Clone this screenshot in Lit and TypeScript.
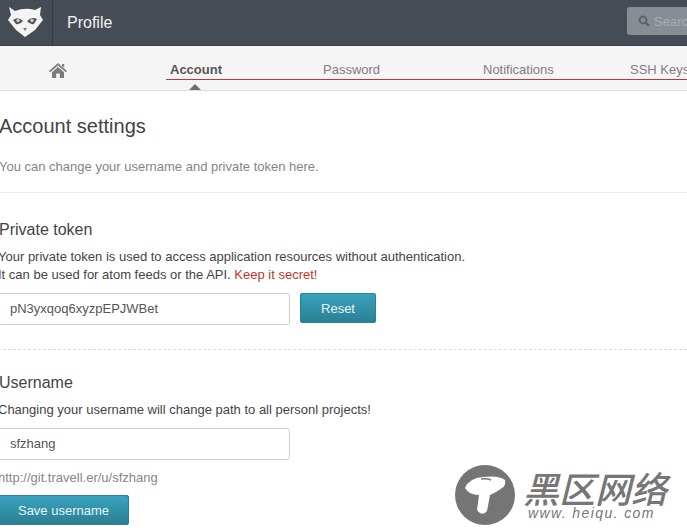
import { LitElement, html, css } from 'lit'
import { customElement } from 'lit/decorators.js'

@customElement('app-root')
export class AppRoot extends LitElement {
  render() {
    return html`
      <header class="top">
        <div class="logo">
          <svg width="36" height="31" viewBox="0 0 36 31">
            <path d="M1 0 L7 4 Q17 0 27 3 L33 0 L32 8 L35 13 L27 23 L17 30 L8 23 L0 13 L3 8 Z" fill="#f4f4f4" />
            <path d="M5 13 Q10 9 15 14 Q12 18 8 17 Z M29 12 Q24 9 19 14 Q22 18 26 17 Z" fill="#50565f" />
            <circle cx="10" cy="13.5" r="1.6" fill="#d8d8d8" />
            <circle cx="24" cy="13.5" r="1.6" fill="#d8d8d8" />
            <path d="M15 21 H19 L17 24 Z" fill="#777" />
          </svg>
        </div>
        <div class="title">Profile</div>
        <div class="search">
          <svg width="12" height="12" viewBox="0 0 12 12">
            <circle cx="5" cy="5" r="3.4" fill="none" stroke="#5e636b" stroke-width="2" />
            <path d="M7.5 7.5 L11 11" stroke="#5e636b" stroke-width="2.4" />
          </svg>
          <span>Search</span>
        </div>
      </header>
      <nav class="tabs">
        <div class="home">
          <svg width="18" height="15" viewBox="0 0 18 15">
            <path d="M9 0 L18 8 L16.8 9.2 L9 2.4 L1.2 9.2 L0 8 Z M13 1 H15.2 V4.6 L13 2.8 Z M3 9.2 L9 4 L15 9.2 V15 H10.8 V10.6 H7.2 V15 H3 Z" fill="#7b7b7b" />
          </svg>
        </div>
        <a class="tab active">Account</a>
        <a class="tab pw">Password</a>
        <a class="tab nt">Notifications</a>
        <a class="tab ssh">SSH Keys</a>
        <i class="redline"></i>
        <i class="caret"></i>
      </nav>
      <main class="page">
        <h1>Account settings</h1>
        <p class="lead">You can change your username and private token here.</p>
        <hr class="solid" />
        <section class="token">
          <h2>Private token</h2>
          <p class="body">Your private token is used to access application resources without authentication.<br />It can be used for atom feeds or the API. <span class="red">Keep it secret!</span></p>
          <div class="row">
            <div class="input">pN3yxqoq6xyzpEPJWBet</div>
            <button class="btn reset">Reset</button>
          </div>
        </section>
        <hr class="dashed" />
        <section class="user">
          <h2>Username</h2>
          <p class="body">Changing your username will change path to all personl projects!</p>
          <div class="input">sfzhang</div>
          <p class="url">http://git.travell.er/u/sfzhang</p>
          <button class="btn save">Save username</button>
        </section>
      </main>
      <div class="mark">
        <svg width="60" height="60" viewBox="0 0 60 60">
          <circle cx="30" cy="30" r="30" fill="#757575" />
          <path d="M10 23 Q14 13 28 12 Q44 10 50 15 Q51 21 47 23 Q40 28 35 30 L32 46 Q27 52 22 45 L24 30 Q14 30 10 23 Z" fill="#fff" />
          <path d="M26 14 Q32 13 36 15" stroke="#777" stroke-width="1.5" fill="none" />
        </svg>
        <div class="mark-text">
          <div class="cn">黑区网络</div>
          <div class="en">www. heiqu. com</div>
        </div>
      </div>
    `
  }

  static styles = css`
    :host {
      display: block;
      position: relative;
      width: 687px;
      height: 530px;
      overflow: hidden;
      background: #fff;
      font-family: 'Liberation Sans', Arial, sans-serif;
      color: #555;
    }
    .top {
      display: flex;
      align-items: center;
      height: 46px;
      box-sizing: border-box;
      background: #454c56;
      border-bottom: 1px solid #3a4049;
    }
    .logo {
      width: 53px;
      height: 45px;
      display: flex;
      align-items: center;
      justify-content: center;
      box-sizing: border-box;
      border-right: 1px solid #353b44;
    }
    .title {
      margin-left: 14px;
      font-size: 16px;
      color: #f2f2f2;
    }
    .search {
      margin-left: auto;
      margin-right: -40px;
      width: 100px;
      height: 28px;
      margin-top: -3px;
      flex: none;
      box-sizing: border-box;
      padding-left: 11px;
      display: flex;
      align-items: center;
      gap: 4px;
      border-radius: 3px;
      background: #888d94;
      color: #a9adb2;
      font-size: 13px;
    }
    .tabs {
      position: relative;
      height: 45px;
      box-sizing: border-box;
      background: #f5f5f5;
      border-bottom: 1px solid #e0dfdf;
      font-size: 13px;
      color: #7e7e7e;
    }
    .home {
      position: absolute;
      left: 49px;
      top: 17px;
      line-height: 0;
    }
    .tab {
      position: absolute;
      top: 16px;
      line-height: 15px;
    }
    .active {
      left: 170px;
      font-weight: bold;
      color: #555;
    }
    .pw {
      left: 323px;
    }
    .nt {
      left: 483px;
    }
    .ssh {
      left: 630px;
      white-space: nowrap;
    }
    .redline {
      position: absolute;
      left: 166px;
      right: 0;
      top: 33px;
      height: 1px;
      background: #c4323a;
    }
    .caret {
      position: absolute;
      left: 189px;
      top: 38px;
      border: 6px solid transparent;
      border-top: 0;
      border-bottom: 6px solid #706f6f;
    }
    .page {
      margin-left: -2px;
      width: 689px;
    }
    h1 {
      margin: 0;
      padding: 25px 0 0 1px;
      font-size: 20px;
      line-height: 21px;
      font-weight: normal;
      color: #444;
    }
    .lead {
      margin: 22px 0 0;
      padding-left: 1px;
      font-size: 13px;
      line-height: 15px;
      color: #858585;
    }
    hr {
      margin: 0;
      border: 0;
    }
    .solid {
      margin-top: 18px;
      border-top: 1px solid #eaeaea;
    }
    .dashed {
      margin-top: 24px;
      border-top: 1px dashed #dcdcdc;
    }
    h2 {
      margin: 0;
      padding-left: 1px;
      font-size: 16px;
      line-height: 16px;
      font-weight: normal;
      color: #444;
    }
    .token {
      padding-top: 29px;
    }
    .user {
      padding-top: 25px;
    }
    .body {
      margin: 10px 0 0;
      font-size: 13px;
      line-height: 18px;
      color: #444;
    }
    .red {
      color: #c0392b;
    }
    .row {
      display: flex;
      gap: 10px;
      margin-top: 9px;
    }
    .input {
      width: 292px;
      height: 32px;
      box-sizing: border-box;
      padding-left: 11px;
      line-height: 30px;
      border: 1px solid #ccc;
      border-radius: 3px;
      background: #fff;
      font-size: 13px;
      color: #555;
    }
    .user .input {
      margin-top: 9px;
    }
    .url {
      margin: 10px 0 0;
      font-size: 13px;
      line-height: 15px;
      color: #858585;
    }
    .btn {
      display: block;
      height: 30px;
      padding: 0;
      border: 0;
      border-radius: 3px;
      font: inherit;
      font-size: 13px;
      color: #e6f4f7;
      background: linear-gradient(#3aa3c0, #2a7f91);
      box-shadow: inset 0 0 0 1px #2b8297;
    }
    .reset {
      width: 76px;
    }
    .save {
      width: 131px;
      margin-top: 10px;
    }
    .mark {
      position: absolute;
      left: 455px;
      top: 465px;
      display: flex;
      gap: 8px;
    }
    .mark-text {
      margin-top: 3px;
      color: #767676;
    }
    .cn {
      font-family: 'Noto Sans CJK SC', sans-serif;
      font-size: 36px;
      line-height: 38px;
      font-style: italic;
      font-weight: 500;
      white-space: nowrap;
    }
    .en {
      font-size: 14px;
      line-height: 15px;
      font-style: italic;
      letter-spacing: 1.4px;
      white-space: nowrap;
      margin-left: 5px;
    }
  `
}
